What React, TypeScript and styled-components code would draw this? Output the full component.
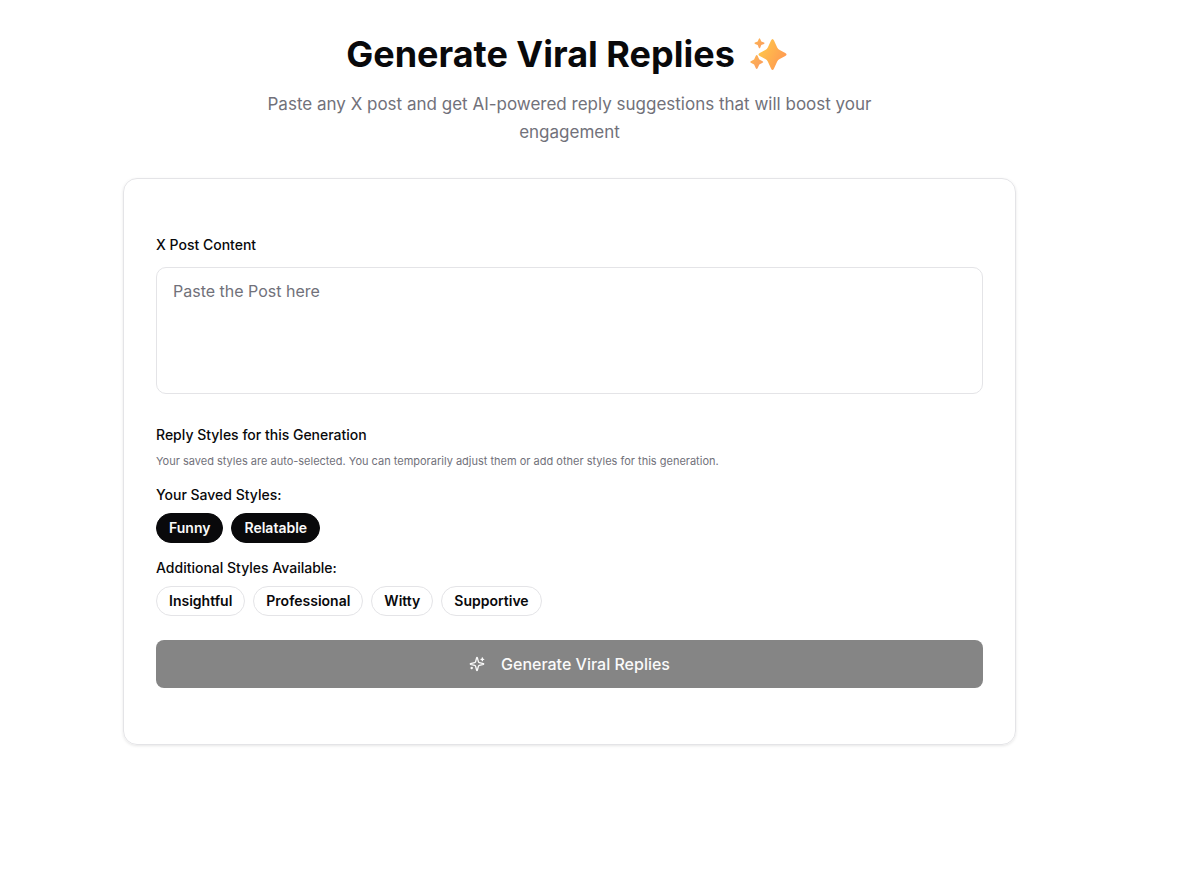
import React, { useState } from "react";
import styled, { createGlobalStyle } from "styled-components";

const GlobalStyle = createGlobalStyle`
  *, *::before, *::after { box-sizing: border-box; }
  body {
    margin: 0;
    background: #fff;
    color: #09090b;
    font-family: Inter, "Liberation Sans", sans-serif;
  }
  button, textarea { font-family: inherit; }
`;

const Page = styled.main`
  padding: 32px 61px 32px 0;
`;

const Container = styled.div`
  width: 100%;
  max-width: 893px;
  margin: 0 auto;
`;

const Header = styled.header`
  text-align: center;
  margin-bottom: 32px;
`;

const Title = styled.h1`
  display: flex;
  align-items: center;
  justify-content: center;
  gap: 14px;
  margin: 0 0 13px;
  font-size: 36px;
  line-height: 45px;
  font-weight: 700;
`;

const Subtitle = styled.p`
  max-width: 672px;
  margin: 0 auto;
  font-size: 17px;
  line-height: 28px;
  color: #71717a;
`;

const Card = styled.form`
  display: flex;
  flex-direction: column;
  padding: 56px 32px;
  border: 1px solid #e4e4e7;
  border-radius: 14px;
  box-shadow: 0 1px 3px rgba(0, 0, 0, 0.1);
`;

const Label = styled.label`
  margin-bottom: 12px;
  font-size: 14px;
  line-height: 20px;
  font-weight: 500;
`;

const PostInput = styled.textarea`
  display: block;
  width: 100%;
  height: 127px;
  margin-bottom: 31px;
  padding: 11px 16px;
  border: 1px solid #e4e4e7;
  border-radius: 10px;
  background: #fff;
  color: #09090b;
  font-size: 16px;
  line-height: 24px;
  resize: none;
  &::placeholder { color: #71717a; opacity: 1; }
`;

const SectionTitle = styled.h2`
  margin: 0 0 8px;
  font-size: 14px;
  line-height: 20px;
  font-weight: 500;
`;

const Hint = styled.p`
  margin: 0 0 16px;
  font-size: 11px;
  line-height: 16px;
  color: #71717a;
`;

const GroupTitle = styled.h3`
  margin: 0 0 8px;
  font-size: 14px;
  line-height: 20px;
  font-weight: 500;
`;

const Chips = styled.div`
  display: flex;
  flex-wrap: wrap;
  gap: 8px;
  margin-bottom: 15px;
`;

const Chip = styled.button<{ $selected: boolean }>`
  height: 30px;
  padding: 0 12px;
  border: 1px solid ${(p) => (p.$selected ? "#09090b" : "#e4e4e7")};
  border-radius: 15px;
  background: ${(p) => (p.$selected ? "#09090b" : "#fff")};
  color: ${(p) => (p.$selected ? "#fafafa" : "#09090b")};
  font-size: 14px;
  line-height: 20px;
  font-weight: 600;
  cursor: pointer;
`;

const Submit = styled.button`
  display: flex;
  align-items: center;
  justify-content: center;
  gap: 16px;
  height: 48px;
  margin-top: 9px;
  border: 0;
  border-radius: 8px;
  background: #858585;
  color: #fafafa;
  font-size: 16px;
  line-height: 24px;
  font-weight: 500;
`;

const SparkleEmoji = () => (
  <svg width="44" height="40" viewBox="0 0 44 40" aria-hidden="true">
    <defs>
      <linearGradient id="spark" x1="0" y1="0.2" x2="1" y2="0.8">
        <stop offset="0.1" stopColor="#ffc44a" />
        <stop offset="0.9" stopColor="#ff9a52" />
      </linearGradient>
      <linearGradient id="spark-small" x1="0" y1="0" x2="1" y2="1">
        <stop offset="0" stopColor="#ffb650" />
        <stop offset="1" stopColor="#f99a62" />
      </linearGradient>
    </defs>
    <path
      fill="url(#spark)"
      d="M22 5.500Q23.500 2.500 25 5.500L28.200 12.500Q29 14.200 30.700 15L36.300 18Q38.800 19.500 36.300 21L30.700 24Q29 24.800 28.200 26.500L25 33.500Q23.500 36.500 22 33.500L18.800 26.500Q18 24.800 16.300 24L10.700 21Q8.200 19.500 10.700 18L16.300 15Q18 14.200 18.800 12.500Z"
    />
    <g fill="url(#spark-small)">
      <path d="M9.800 3.900Q10.500 2.800 11.200 3.900L12.300 6.500L15 7.600Q16 8.300 15 9L12.300 10.100L11.200 12.700Q10.500 13.800 9.800 12.700L8.700 10.100L6 9Q5 8.300 6 7.600L8.700 6.500Z" />
      <path d="M6.800 20.700Q7.700 19.200 8.600 20.700L10.300 24.500L13.600 26.200Q14.800 27 13.600 27.800L10.300 29.500L8.600 33.300Q7.700 34.800 6.800 33.300L5.100 29.500L1.800 27.800Q.6 27 1.800 26.200L5.100 24.500Z" />
    </g>
  </svg>
);

const SparklesIcon = () => (
  <svg
    width="16"
    height="16"
    viewBox="0 0 24 24"
    fill="none"
    stroke="currentColor"
    strokeWidth="2"
    strokeLinecap="round"
    strokeLinejoin="round"
    aria-hidden="true"
  >
    <path d="M9.937 15.500A2 2 0 0 0 8.500 14.063l-6.135-1.582a.5.5 0 0 1 0-.962L8.500 9.936A2 2 0 0 0 9.937 8.500l1.582-6.135a.5.5 0 0 1 .963 0L14.063 8.500A2 2 0 0 0 15.500 9.937l6.135 1.581a.5.5 0 0 1 0 .964L15.500 14.063a2 2 0 0 0-1.437 1.437l-1.582 6.135a.5.5 0 0 1-.963 0z" />
    <path d="M20 3v4" />
    <path d="M22 5h-4" />
    <path d="M4 17v2" />
    <path d="M5 18H3" />
  </svg>
);

const savedStyles = ["Funny", "Relatable"];
const additionalStyles = ["Insightful", "Professional", "Witty", "Supportive"];

export default function App() {
  const [selected, setSelected] = useState<string[]>(savedStyles);
  const toggle = (name: string) =>
    setSelected((s) => (s.includes(name) ? s.filter((n) => n !== name) : [...s, name]));

  const renderChips = (names: string[]) => (
    <Chips>
      {names.map((name) => (
        <Chip
          key={name}
          type="button"
          $selected={selected.includes(name)}
          aria-pressed={selected.includes(name)}
          onClick={() => toggle(name)}
        >
          {name}
        </Chip>
      ))}
    </Chips>
  );

  return (
    <>
      <GlobalStyle />
      <Page>
        <Container>
          <Header>
            <Title>
              Generate Viral Replies
              <SparkleEmoji />
            </Title>
            <Subtitle>
              Paste any X post and get AI-powered reply suggestions that will boost your engagement
            </Subtitle>
          </Header>
          <Card onSubmit={(e) => e.preventDefault()}>
            <Label htmlFor="post">X Post Content</Label>
            <PostInput id="post" placeholder="Paste the Post here" />
            <SectionTitle>Reply Styles for this Generation</SectionTitle>
            <Hint>
              Your saved styles are auto-selected. You can temporarily adjust them or add other
              styles for this generation.
            </Hint>
            <GroupTitle>Your Saved Styles:</GroupTitle>
            {renderChips(savedStyles)}
            <GroupTitle>Additional Styles Available:</GroupTitle>
            {renderChips(additionalStyles)}
            <Submit type="submit" disabled>
              <SparklesIcon />
              Generate Viral Replies
            </Submit>
          </Card>
        </Container>
      </Page>
    </>
  );
}
